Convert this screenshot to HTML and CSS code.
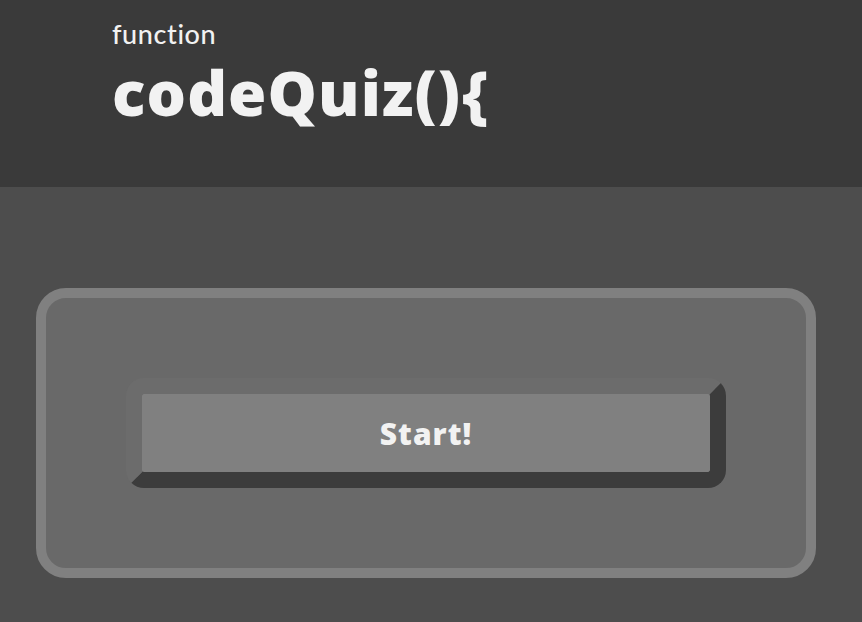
FILE: index.html
```html
<!DOCTYPE html>
<html lang="en">
<head>
<meta charset="utf-8">
<title>codeQuiz</title>
<link rel="stylesheet" href="styles.css">
</head>
<body>
<header class="site-header">
  <div class="kicker">function</div>
  <h1 class="title">codeQuiz(){</h1>
</header>
<main class="main">
  <section class="card">
    <button class="start-btn" type="button">Start!</button>
  </section>
</main>
</body>
</html>
```

FILE: styles.css
```css
html, body {
  margin: 0;
  padding: 0;
}
body {
  background: #4d4d4d;
  font-family: "Open Sans", "Lato", sans-serif;
  color: #f2f2f2;
  min-height: 622px;
}
.site-header {
  background: #3a3a3a;
  height: 187px;
  box-sizing: border-box;
  padding: 18px 0 0 112px;
}
.kicker {
  font-family: "Lato", "Open Sans", sans-serif;
  font-size: 27px;
  font-weight: 500;
  line-height: 32px;
  letter-spacing: 0.6px;
}
.title {
  margin: 0;
  font-size: 62px;
  font-weight: 800;
  line-height: 84px;
  letter-spacing: 1.1px;
}
.main {
  padding: 101px 46px 0 36px;
}
.card {
  box-sizing: border-box;
  height: 290px;
  border: 10px solid #808080;
  border-radius: 30px;
  background: #696969;
  padding: 80px 80px;
  display: flex;
  justify-content: center;
}
.start-btn {
  box-sizing: border-box;
  width: 600px;
  height: 110px;
  border: 16px solid;
  border-color: #6c6c6c #3c3c3c #3c3c3c #6c6c6c;
  border-radius: 18px;
  background: #808080;
  color: #f2f2f2;
  font-family: "Open Sans", "Lato", sans-serif;
  font-size: 30px;
  font-weight: 800;
  letter-spacing: 1px;
  padding: 0;
  cursor: pointer;
}
```
